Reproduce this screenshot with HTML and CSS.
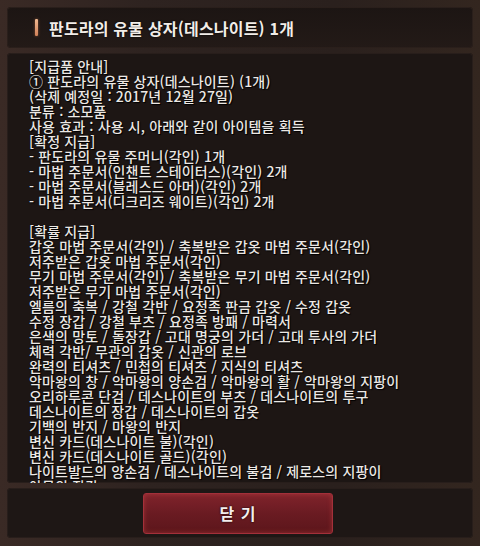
FILE: index.html
```html
<!DOCTYPE html>
<html lang="ko">
<head>
<meta charset="utf-8">
<link rel="stylesheet" href="styles.css">
</head>
<body>
<div class="dialog">
  <div class="title-panel">
    <span class="title-mark"></span>
    <h1 class="title">판도라의 유물 상자(데스나이트) 1개</h1>
  </div>
  <div class="content-panel">
    <div class="content">
      <p>[지급품 안내]</p>
      <p>① 판도라의 유물 상자(데스나이트) (1개)</p>
      <p>(삭제 예정일 : 2017년 12월 27일)</p>
      <p>분류 : 소모품</p>
      <p>사용 효과 : 사용 시, 아래와 같이 아이템을 획득</p>
      <p>[확정 지급]</p>
      <p>- 판도라의 유물 주머니(각인) 1개</p>
      <p>- 마법 주문서(인챈트 스테이터스)(각인) 2개</p>
      <p>- 마법 주문서(블레스드 아머)(각인) 2개</p>
      <p>- 마법 주문서(디크리즈 웨이트)(각인) 2개</p>
      <p>&nbsp;</p>
      <p>[확률 지급]</p>
      <p>갑옷 마법 주문서(각인) / 축복받은 갑옷 마법 주문서(각인)</p>
      <p>저주받은 갑옷 마법 주문서(각인)</p>
      <p>무기 마법 주문서(각인) / 축복받은 무기 마법 주문서(각인)</p>
      <p>저주받은 무기 마법 주문서(각인)</p>
      <p>엘름의 축복 / 강철 각반 / 요정족 판금 갑옷 / 수정 갑옷</p>
      <p>수정 장갑 / 강철 부츠 / 요정족 방패 / 마력서</p>
      <p>은색의 망토 / 돌장갑 / 고대 명궁의 가더 / 고대 투사의 가더</p>
      <p>체력 각반/ 무관의 갑옷 / 신관의 로브</p>
      <p>완력의 티셔츠 / 민첩의 티셔츠 / 지식의 티셔츠</p>
      <p>악마왕의 창 / 악마왕의 양손검 / 악마왕의 활 / 악마왕의 지팡이</p>
      <p>오리하루콘 단검 / 데스나이트의 부츠 / 데스나이트의 투구</p>
      <p>데스나이트의 장갑 / 데스나이트의 갑옷</p>
      <p>기백의 반지 / 마왕의 반지</p>
      <p>변신 카드(데스나이트 불)(각인)</p>
      <p>변신 카드(데스나이트 골드)(각인)</p>
      <p>나이트발드의 양손검 / 데스나이트의 불검 / 제로스의 지팡이</p>
      <p>아뮬의 장갑</p>
    </div>
  </div>
  <div class="button-panel">
    <button class="close-btn">닫 기</button>
  </div>
</div>
</body>
</html>
```

FILE: styles.css
```css
html, body {
  margin: 0;
  padding: 0;
}
body {
  width: 480px;
  height: 546px;
  background: linear-gradient(90deg, #3a2a25 0%, #2e2320 30%, #2a201d 70%, #33261f 100%);
  font-family: "Noto Sans CJK KR", "Noto Sans", sans-serif;
  overflow: hidden;
}
.dialog {
  box-sizing: border-box;
  height: 546px;
  padding: 7px 7px 8px 7px;
  display: flex;
  flex-direction: column;
  gap: 5px;
}
.title-panel {
  height: 41px;
  flex: none;
  box-sizing: border-box;
  background: linear-gradient(180deg, #1c1513 0%, #231a17 100%);
  border-radius: 4px;
  box-shadow: inset 0 0 0 1px #2a1f1b;
  display: flex;
  align-items: center;
  padding-left: 28px;
}
.title-mark {
  width: 3px;
  height: 17px;
  background: linear-gradient(180deg, #f0b890, #d08058);
  border-radius: 1px;
  box-shadow: 0 0 3px rgba(230, 140, 90, 0.5);
  margin-right: 11px;
}
.title {
  margin: 0;
  font-size: 16px;
  font-weight: 700;
  color: #f2ede8;
  letter-spacing: 0.2px;
  text-shadow: 0 0 2px #000;
}
.content-panel {
  flex: none;
  height: 430px;
  box-sizing: border-box;
  background: #1d1614;
  border-radius: 4px;
  box-shadow: inset 0 0 0 1px #281e1b;
  overflow: hidden;
  padding: 6px 0 0 22px;
}
.content p {
  margin: 0;
  font-size: 14px;
  font-weight: 500;
  line-height: 15px;
  color: #ece8e4;
  white-space: nowrap;
  letter-spacing: 0.15px;
  text-shadow: 0 0 1px #000, 1px 1px 1px #000;
}
.button-panel {
  flex: 1;
  box-sizing: border-box;
  background: #1e1715;
  border-radius: 4px;
  box-shadow: inset 0 0 0 1px #281e1b;
  display: flex;
  align-items: center;
  justify-content: center;
}
.close-btn {
  width: 190px;
  height: 41px;
  margin-left: -4px;
  border: 1px solid #a3303a;
  border-radius: 3px;
  background: linear-gradient(180deg, #80232b 0%, #6a1b22 50%, #5c161b 100%);
  box-shadow: inset 0 0 5px rgba(210, 70, 70, 0.5);
  color: #f4eeee;
  font-family: "Noto Sans CJK KR", "Noto Sans", sans-serif;
  font-size: 16px;
  font-weight: 700;
  letter-spacing: 1px;
  text-shadow: 0 0 2px #000;
  cursor: pointer;
}
```
